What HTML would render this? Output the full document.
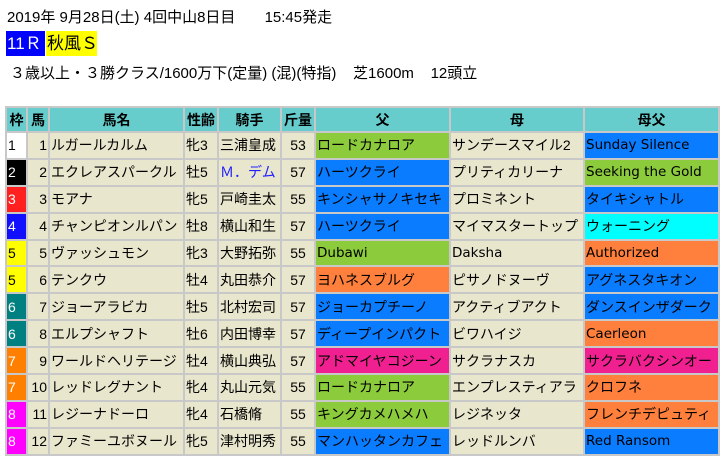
<!DOCTYPE html>
<html><head><meta charset="utf-8"><style>
body{margin:0;background:#fff;font-family:"Liberation Sans","Noto Sans CJK JP",sans-serif;font-size:14px;color:#000;width:722px;height:455px;overflow:hidden;position:relative}
.t{position:absolute;white-space:nowrap}
table{position:absolute;left:5px;top:106px;border-collapse:separate;border-spacing:2px;background:#c8c8c8;table-layout:fixed;width:714px}
td,th{padding:0 1px;height:24.9px;background:#e8e6cc;font-size:14px;white-space:nowrap;overflow:hidden;font-weight:normal}
th{background:#66cccc;font-weight:bold;text-align:center;height:23px}
.r{text-align:right}.c{text-align:center}
.e{font-family:"DejaVu Sans",sans-serif;font-size:13.5px}
.g{background:#8ccc3c}.b{background:#0a7cff}.cy{background:#00ffff}.o{background:#ff803c}.p{background:#f02090}
</style></head><body>
<div class="t" style="left:7px;top:6px;font-size:15px">2019年 9月28日(土) 4回中山8日目&nbsp;&nbsp;&nbsp;&nbsp;&nbsp;&nbsp;&nbsp;15:45発走</div>
<div class="t" style="left:6px;top:31px;width:38px;height:25px;background:#0000ff;color:#fff;font-size:17px;line-height:25px;padding-left:1px">11Ｒ</div>
<div class="t" style="left:46px;top:31px;width:50px;height:25px;background:#ffff00;font-size:17px;line-height:25px;padding-left:1px">秋風Ｓ</div>
<div class="t" style="left:10px;top:62px;font-size:15px">３歳以上・３勝クラス/1600万下(定量) (混)(特指)&nbsp;&nbsp;&nbsp;&nbsp;芝1600m&nbsp;&nbsp;&nbsp;&nbsp;12頭立</div>
<table>
<colgroup><col style="width:19px"><col style="width:20px"><col style="width:133px"><col style="width:32px"><col style="width:61px"><col style="width:32px"><col style="width:133px"><col style="width:132px"><col style="width:133px"></colgroup>
<tr><th>枠</th><th>馬</th><th>馬名</th><th>性齢</th><th>騎手</th><th>斤量</th><th>父</th><th>母</th><th>母父</th></tr>
<tr><td style="background:#fff">1</td><td class="r">1</td><td>ルガールカルム</td><td>牝3</td><td>三浦皇成</td><td class="c">53</td><td class="g">ロードカナロア</td><td>サンデースマイル2</td><td class="b e">Sunday Silence</td></tr>
<tr><td style="background:#000;color:#fff">2</td><td class="r">2</td><td>エクレアスパークル</td><td>牡5</td><td style="color:#2020ff">Ｍ．デム</td><td class="c">57</td><td class="b">ハーツクライ</td><td>プリティカリーナ</td><td class="g e">Seeking the Gold</td></tr>
<tr><td style="background:#ff2020;color:#fff">3</td><td class="r">3</td><td>モアナ</td><td>牝5</td><td>戸崎圭太</td><td class="c">55</td><td class="b">キンシャサノキセキ</td><td>プロミネント</td><td class="b">タイキシャトル</td></tr>
<tr><td style="background:#1010ff;color:#fff">4</td><td class="r">4</td><td>チャンピオンルパン</td><td>牡8</td><td>横山和生</td><td class="c">57</td><td class="b">ハーツクライ</td><td>マイマスタートップ</td><td class="cy">ウォーニング</td></tr>
<tr><td style="background:#ffff00">5</td><td class="r">5</td><td>ヴァッシュモン</td><td>牝3</td><td>大野拓弥</td><td class="c">55</td><td class="g e">Dubawi</td><td class="e">Daksha</td><td class="o e">Authorized</td></tr>
<tr><td style="background:#ffff00">5</td><td class="r">6</td><td>テンクウ</td><td>牡4</td><td>丸田恭介</td><td class="c">57</td><td class="o">ヨハネスブルグ</td><td>ピサノドヌーヴ</td><td class="b">アグネスタキオン</td></tr>
<tr><td style="background:#008080;color:#fff">6</td><td class="r">7</td><td>ジョーアラビカ</td><td>牡5</td><td>北村宏司</td><td class="c">57</td><td class="b">ジョーカプチーノ</td><td>アクティブアクト</td><td class="b">ダンスインザダーク</td></tr>
<tr><td style="background:#008080;color:#fff">6</td><td class="r">8</td><td>エルプシャフト</td><td>牡6</td><td>内田博幸</td><td class="c">57</td><td class="b">ディープインパクト</td><td>ビワハイジ</td><td class="o e">Caerleon</td></tr>
<tr><td style="background:#ff8000;color:#fff">7</td><td class="r">9</td><td>ワールドヘリテージ</td><td>牡4</td><td>横山典弘</td><td class="c">57</td><td class="p">アドマイヤコジーン</td><td>サクラナスカ</td><td class="p">サクラバクシンオー</td></tr>
<tr><td style="background:#ff8000;color:#fff">7</td><td class="r">10</td><td>レッドレグナント</td><td>牝4</td><td>丸山元気</td><td class="c">55</td><td class="g">ロードカナロア</td><td>エンプレスティアラ</td><td class="o">クロフネ</td></tr>
<tr><td style="background:#ff00ff;color:#fff">8</td><td class="r">11</td><td>レジーナドーロ</td><td>牝4</td><td>石橋脩</td><td class="c">55</td><td class="g">キングカメハメハ</td><td>レジネッタ</td><td class="o">フレンチデピュティ</td></tr>
<tr><td style="background:#ff00ff;color:#fff">8</td><td class="r">12</td><td>ファミーユボヌール</td><td>牝5</td><td>津村明秀</td><td class="c">55</td><td class="b">マンハッタンカフェ</td><td>レッドルンバ</td><td class="b e">Red Ransom</td></tr>
</table>
</body></html>
